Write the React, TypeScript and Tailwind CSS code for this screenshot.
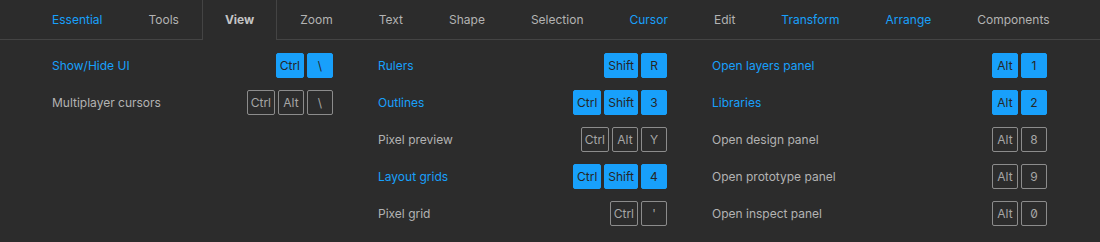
const tabs = [
  { label: "Essential", blue: true },
  { label: "Tools" },
  { label: "View", active: true },
  { label: "Zoom" },
  { label: "Text" },
  { label: "Shape" },
  { label: "Selection" },
  { label: "Cursor", blue: true },
  { label: "Edit" },
  { label: "Transform", blue: true },
  { label: "Arrange", blue: true },
  { label: "Components" }
];

type Shortcut = { label: string; keys: string[]; on?: boolean };

const columns: { width: string; items: Shortcut[] }[] = [
  {
    width: "w-[281px]",
    items: [
      { label: "Show/Hide UI", keys: ["Ctrl", "\\"], on: true },
      { label: "Multiplayer cursors", keys: ["Ctrl", "Alt", "\\"] }
    ]
  },
  {
    width: "w-[289px]",
    items: [
      { label: "Rulers", keys: ["Shift", "R"], on: true },
      { label: "Outlines", keys: ["Ctrl", "Shift", "3"], on: true },
      { label: "Pixel preview", keys: ["Ctrl", "Alt", "Y"] },
      { label: "Layout grids", keys: ["Ctrl", "Shift", "4"], on: true },
      { label: "Pixel grid", keys: ["Ctrl", "'"] }
    ]
  },
  {
    width: "w-[335px]",
    items: [
      { label: "Open layers panel", keys: ["Alt", "1"], on: true },
      { label: "Libraries", keys: ["Alt", "2"], on: true },
      { label: "Open design panel", keys: ["Alt", "8"] },
      { label: "Open prototype panel", keys: ["Alt", "9"] },
      { label: "Open inspect panel", keys: ["Alt", "0"] }
    ]
  }
];

function Key({ k, on }: { k: string; on?: boolean }) {
  return (
    <span
      className={
        on
          ? "flex h-[25px] min-w-[26px] items-center justify-center rounded-[2px] border border-[#18a0fb] bg-[#18a0fb] px-[3px] text-[12px] text-[#262626] [font-feature-settings:'zero']"
          : "flex h-[25px] min-w-[26px] items-center justify-center rounded-[2px] border border-[#8c8c8c] px-[3px] text-[12px] text-[#a6a6a6] [font-feature-settings:'zero']"
      }
    >
      {k}
    </span>
  );
}

export default function App() {
  return (
    <div className="h-[242px] w-[1100px] overflow-hidden bg-[#2c2c2c] font-['Inter',sans-serif]">
      <nav className="flex h-[40px] border-b border-[#444] pl-[29px]">
        {tabs.map((tab) => (
          <div
            key={tab.label}
            className={
              tab.active
                ? "-mb-px flex h-[40px] items-center border-x border-[#444] bg-[#2c2c2c] px-[22px] text-[12px] font-bold text-[#c4c4c4]"
                : tab.blue
                  ? "flex items-center border-x border-transparent px-[22px] text-[12px] text-[#18a0fb]"
                  : "flex items-center border-x border-transparent px-[22px] text-[12px] text-[#b3b3b3]"
            }
          >
            {tab.label}
          </div>
        ))}
      </nav>

      <div className="flex gap-x-[45px] pl-[52px] pt-[13px]">
        {columns.map((col, i) => (
          <div key={i} className={`flex flex-col gap-y-[12px] ${col.width}`}>
            {col.items.map((item) => (
              <div key={item.label} className="flex h-[25px] items-center justify-between">
                <span className={item.on ? "text-[12px] text-[#18a0fb]" : "text-[12px] text-[#b3b3b3]"}>{item.label}</span>
                <div className="flex gap-[3px]">
                  {item.keys.map((k) => (
                    <Key key={k} k={k} on={item.on} />
                  ))}
                </div>
              </div>
            ))}
          </div>
        ))}
      </div>
    </div>
  );
}
